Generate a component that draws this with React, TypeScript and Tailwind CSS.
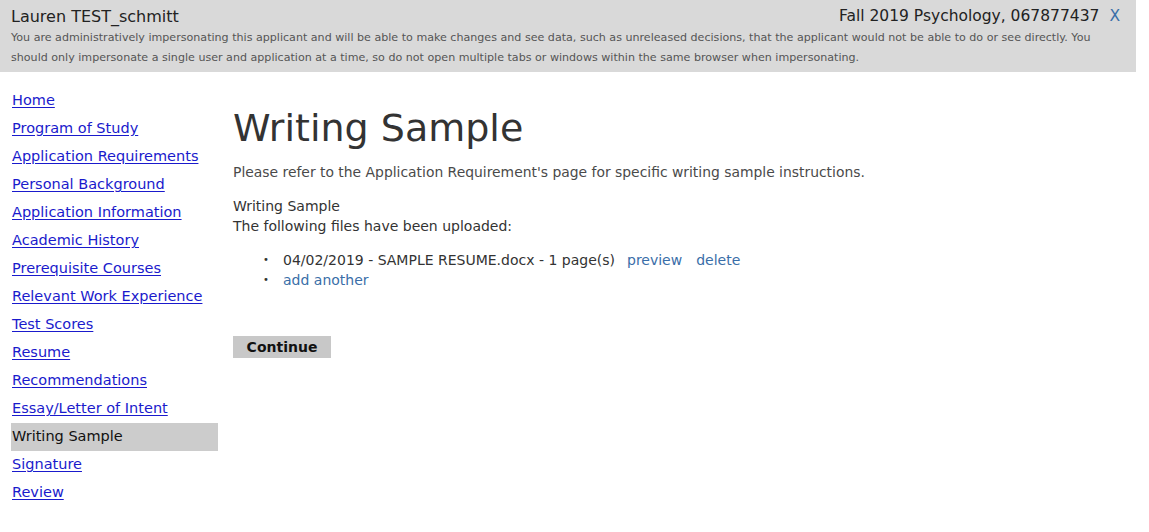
const NAV = [
  "Home",
  "Program of Study",
  "Application Requirements",
  "Personal Background",
  "Application Information",
  "Academic History",
  "Prerequisite Courses",
  "Relevant Work Experience",
  "Test Scores",
  "Resume",
  "Recommendations",
  "Essay/Letter of Intent",
  "Writing Sample",
  "Signature",
  "Review",
];

const ACTIVE = "Writing Sample";

export default function App() {
  return (
    <div className="min-h-[532px] bg-white text-[#222] font-['DejaVu_Sans',sans-serif]">
      {/* impersonation banner */}
      <div className="w-[1136px] bg-[#d9d9d9] pl-[11px] pr-[16px] pt-[5px] pb-[4px]">
        <div className="flex items-center justify-between leading-[23px] text-[#222]">
          <span className="text-[16px]">Lauren TEST_schmitt</span>
          <span className="text-[15.5px]">
            Fall 2019 Psychology, 067877437
            <a href="#" className="ml-[10px] text-[#3a6ea8]">X</a>
          </span>
        </div>
        <p className="text-[11.1px] leading-[20px] text-[#555] pr-[20px]">
          You are administratively impersonating this applicant and will be able to make changes and see data, such as
          unreleased decisions, that the applicant would not be able to do or see directly. You should only impersonate a
          single user and application at a time, so do not open multiple tabs or windows within the same browser when
          impersonating.
        </p>
      </div>

      <div className="flex pt-[15px]">
        {/* left nav */}
        <nav className="w-[207px] ml-[11px] flex flex-col">
          {NAV.map((item) =>
            item === ACTIVE ? (
              <div key={item} className="h-[28px] flex items-center pl-[1px] bg-[#cccccc] text-[14.5px] text-[#111]">
                {item}
              </div>
            ) : (
              <a
                key={item}
                href="#"
                className="h-[28px] flex items-center pl-[1px] text-[14.5px] text-[#1a1acc] underline underline-offset-2"
              >
                {item}
              </a>
            )
          )}
        </nav>

        {/* main */}
        <main className="ml-[15px] pt-[16px]">
          <h1 className="text-[38px] leading-[50px] text-[#333]">Writing Sample</h1>
          <p className="mt-[9px] text-[13.9px] leading-[20px] text-[#4a4a4a]">
            Please refer to the Application Requirement's page for specific writing sample instructions.
          </p>
          <div className="mt-[14px] text-[14px] leading-[20px] text-[#333]">
            <div>Writing Sample</div>
            <div>The following files have been uploaded:</div>
          </div>
          <ul className="mt-[14px] ml-[30px] text-[14px] leading-[20px] text-[#333]">
            <li className="flex items-center">
              <span className="w-[20px] text-[10px]">•</span>
              <span>04/02/2019 - SAMPLE RESUME.docx - 1 page(s)</span>
              <a href="#" className="ml-[12px] text-[#3a6ea8]">preview</a>
              <a href="#" className="ml-[14px] text-[#3a6ea8]">delete</a>
            </li>
            <li className="flex items-center">
              <span className="w-[20px] text-[10px]">•</span>
              <a href="#" className="text-[#3a6ea8]">add another</a>
            </li>
          </ul>
          <button className="mt-[46px] w-[98px] h-[22px] bg-[#c8c8c8] text-[14px] font-bold text-[#111]">
            Continue
          </button>
        </main>
      </div>
    </div>
  );
}
